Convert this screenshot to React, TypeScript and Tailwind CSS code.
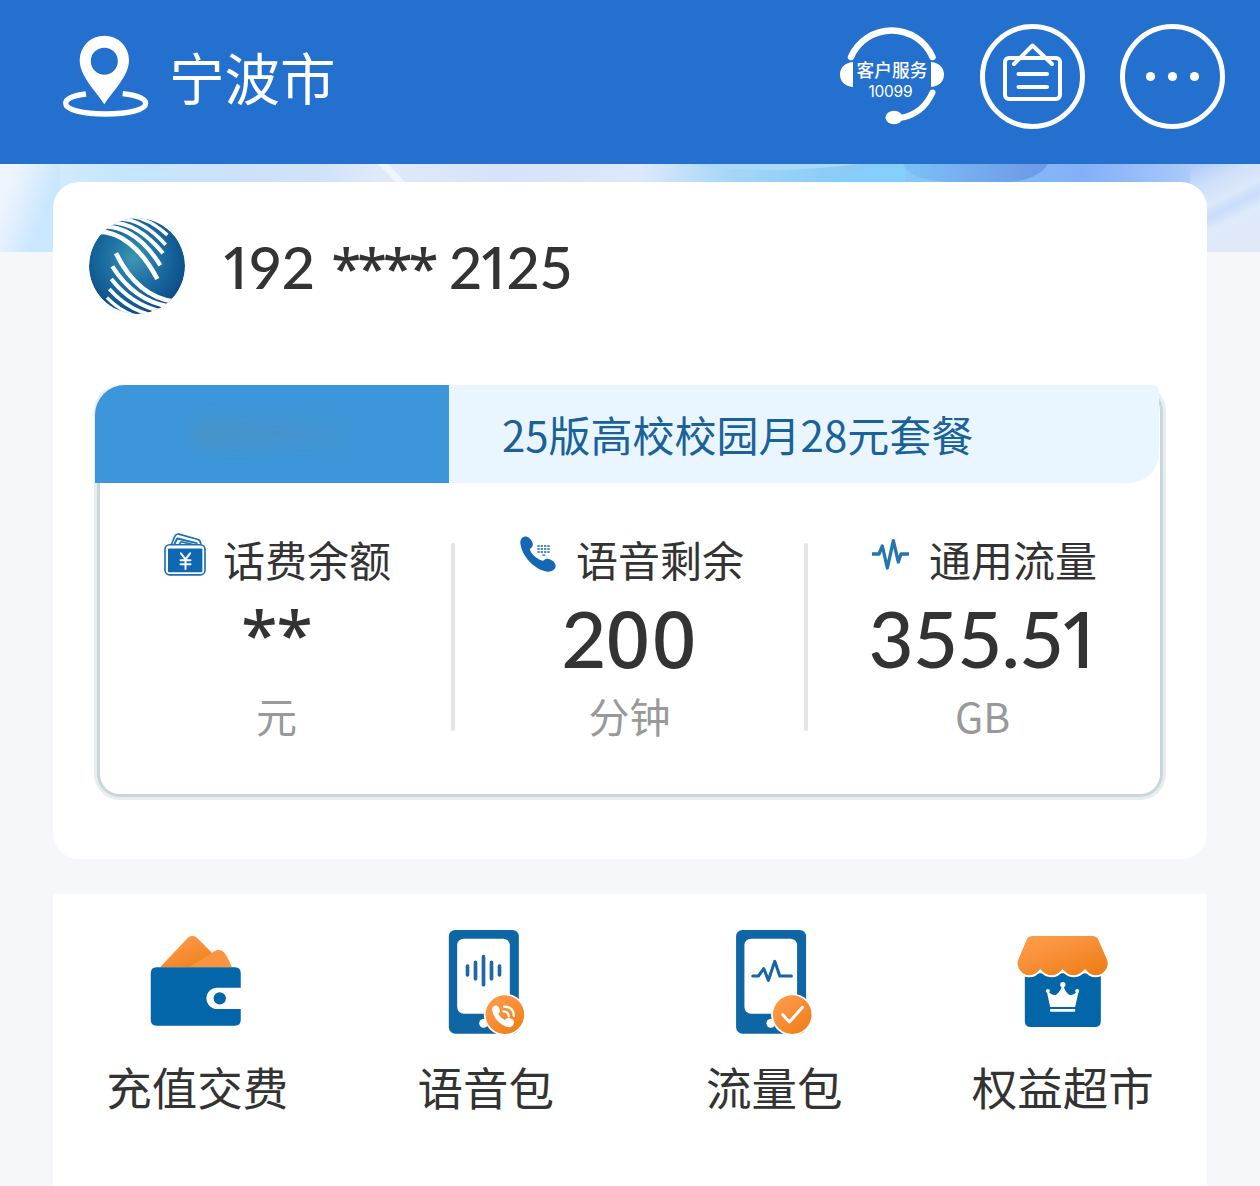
import React from 'react';

function Banner() {
  return (
    <svg className="absolute left-0 top-0 h-[88px] w-full" viewBox="0 164 1260 88" preserveAspectRatio="none">
      <defs>
        <linearGradient id="sky" x1="0" x2="1">
          <stop offset="0" stopColor="#eef5fe" />
          <stop offset="0.03" stopColor="#d6ebfd" />
          <stop offset="0.1" stopColor="#c4e6fd" />
          <stop offset="0.18" stopColor="#cce2fa" />
          <stop offset="0.25" stopColor="#cfe2f8" />
          <stop offset="0.3" stopColor="#dfeafa" />
          <stop offset="0.4" stopColor="#d6e3f8" />
          <stop offset="0.51" stopColor="#dce8fb" />
          <stop offset="0.58" stopColor="#a5d6f8" />
          <stop offset="0.65" stopColor="#8fcdf8" />
          <stop offset="0.76" stopColor="#80c4fa" />
          <stop offset="0.86" stopColor="#83b0f8" />
          <stop offset="0.93" stopColor="#a3c5fa" />
          <stop offset="1" stopColor="#d3e2fb" />
        </linearGradient>
        <linearGradient id="petal" x1="0" x2="1">
          <stop offset="0" stopColor="#7cc0f7" />
          <stop offset="1" stopColor="#6d98e6" />
        </linearGradient>
        <linearGradient id="leftGlow" gradientUnits="userSpaceOnUse" x1="0" y1="200" x2="44" y2="216">
          <stop offset="0" stopColor="#eff5fe" />
          <stop offset="0.3" stopColor="#e6f1fe" />
          <stop offset="1" stopColor="#c9e7fd" />
        </linearGradient>
        <linearGradient id="rightGlow" x1="0" y1="0" x2="0.4" y2="1">
          <stop offset="0" stopColor="#a9c9fb" />
          <stop offset="0.3" stopColor="#d2e1fa" />
          <stop offset="0.5" stopColor="#dbe7fa" />
          <stop offset="0.62" stopColor="#c9dcfa" />
          <stop offset="0.75" stopColor="#dfeafb" />
          <stop offset="1" stopColor="#dfe9f8" />
        </linearGradient>
      </defs>
      <rect x="0" y="164" width="1260" height="88" fill="url(#sky)" />
      <rect x="0" y="164" width="60" height="88" fill="url(#leftGlow)" />
      <rect x="1190" y="164" width="70" height="88" fill="url(#rightGlow)" />
      <path d="M690 164 Q760 176 860 164" fill="#a9dafa" />
      <path d="M800 182 Q850 180 873 164 H905 V182Z" fill="#84cffb" />
      <path d="M903 164 C910 178 930 181 950 182 H1012 Q1040 178 1048 164Z" fill="url(#petal)" />
      <path d="M378 164 L396 182 H405 L388 164Z" fill="#f2f8ff" opacity="0.8" />
    </svg>
  );
}

function PinIcon() {
  return (
    <svg className="h-[82px] w-[86px]" viewBox="69 45 258 246" fill="none">
      <path d="M138 222 C100 227 77 236 77 250 C77 270 130 282 197 282 C264 282 317 270 317 250 C317 236 292 226 248 221" stroke="#fff" strokeWidth="16" />
      <path fillRule="evenodd" fill="#fff" d="M193 253 C170 215 119 170 119 120 A74 73 0 0 1 267 120 C267 170 216 215 193 253Z M193 83 A40.500 40.500 0 1 0 193 164 A40.500 40.500 0 1 0 193 83Z" />
    </svg>
  );
}

function ServiceIcon() {
  return (
    <svg className="h-[106px] w-[106px]" viewBox="839 23 106 106">
      <g fill="none" stroke="#fff" strokeLinecap="round">
        <path d="M851 57 A44.500 44.500 0 0 1 932.500 57" strokeWidth="6.500" />
        <path d="M932.500 92.500 C926 107 916 115.500 900 118" strokeWidth="6" />
      </g>
      <path d="M853 62 V87 C844 86 840 81 840 74.500 C840 68 844 63 853 62Z M931 62 V87 C940 86 944 81 944 74.500 C944 68 940 63 931 62Z" fill="#fff" />
      <ellipse cx="894" cy="117.500" rx="8.500" ry="6.800" fill="#fff" />
      <text x="856.500" y="77.300" textLength="71" fontSize="17.700" fontWeight="500" fontFamily="Noto Sans CJK SC, sans-serif" fill="#fff">客户服务</text>
      <text x="868.500" y="97" textLength="44" fontSize="15.500" fontFamily="Inter, sans-serif" fill="#fff">10099</text>
    </svg>
  );
}

function BoardIcon() {
  return (
    <svg className="h-[106px] w-[106px]" viewBox="979 23 106 106" fill="none" stroke="#fff" strokeWidth="4" strokeLinecap="round" strokeLinejoin="round">
      <circle cx="1032.500" cy="76.500" r="50" strokeWidth="5" />
      <rect x="1005" y="58" width="55" height="41" rx="4" />
      <path d="M1014 64 L1032.500 45.500 L1052 64 M1018.500 74 H1047 M1018.500 87 H1047" />
    </svg>
  );
}

function MoreIcon() {
  return (
    <svg className="h-[106px] w-[106px]" viewBox="1119 23 106 106">
      <circle cx="1172.500" cy="76.500" r="50" fill="none" stroke="#fff" strokeWidth="5" />
      <g fill="#fff">
        <circle cx="1150.500" cy="76.500" r="4.600" />
        <circle cx="1172.500" cy="76.500" r="4.600" />
        <circle cx="1194.500" cy="76.500" r="4.600" />
      </g>
    </svg>
  );
}

function Logo() {
  return (
    <svg className="size-24" viewBox="57 53 288 288">
      <defs>
        <radialGradient id="globe" cx="0.46" cy="0.42" r="0.62">
          <stop offset="0" stopColor="#3f96b3" />
          <stop offset="0.4" stopColor="#1f74a4" />
          <stop offset="0.8" stopColor="#105792" />
          <stop offset="1" stopColor="#0e4681" />
        </radialGradient>
        <clipPath id="disc"><circle cx="201" cy="197" r="144" /></clipPath>
      </defs>
      <g clipPath="url(#disc)">
        <circle cx="201" cy="197" r="144" fill="url(#globe)" />
        <g fill="none" stroke="#fff">
          <path d="M86 94 C150 94 212 142 262 236" strokeWidth="14" />
          <path d="M100 78 C165 78 222 116 271 195" strokeWidth="13" />
          <path d="M120 66 C180 66 232 102 279 159" strokeWidth="12" />
          <path d="M148 56 C198 56 245 87 287 133" strokeWidth="11" />
          <path d="M180 48 C220 52 260 74 292 104" strokeWidth="10" />
          <path d="M138 159 C172 228 225 292 312 304" strokeWidth="14" />
          <path d="M127 198 C165 258 222 306 296 318" strokeWidth="13" />
          <path d="M124 236 C160 282 212 320 275 333" strokeWidth="12" />
          <path d="M118 266 C150 302 192 332 245 344" strokeWidth="11" />
          <path d="M111 292 C135 317 165 338 205 350" strokeWidth="10" />
        </g>
      </g>
    </svg>
  );
}

function BalanceIcon() {
  return (
    <svg className="h-[43px] w-[42px]" viewBox="75 66 127 129" fill="none" stroke="#1b6fb5" strokeWidth="5" strokeLinejoin="round" strokeLinecap="round">
      <path d="M97 101 L108 75 Q112 67 120 69 L178 85 Q187 89 186 101" />
      <path d="M106 100 L115 82 L174 96" strokeWidth="6" />
      <path d="M122 98 L127 92 L160 100" />
      <rect x="78" y="101" width="121" height="91" rx="14" fill="#fff" />
      <rect x="87" y="112" width="104" height="72" rx="3" fill="#0f68b4" stroke="none" />
      <path d="M126 127 L140 145 L154 127 M140 145 V174 M125 148 H155 M125 160 H155" stroke="#fff" strokeWidth="6" />
    </svg>
  );
}

function CallIcon() {
  return (
    <svg className="h-[36px] w-[36px]" viewBox="61 77 108 108">
      <path fill="#1468b3" d="M62 98 C61 84 72 76 82 79 C93 83 101 95 99 106 C98 113 89 113 91 119 C96 133 115 148 128 151 C134 151 135 145 142 145 C153 145 167 155 168 165 C169 177 156 185 144 184 C106 180 66 138 62 98Z" />
      <g fill="#4a8cc5">
        {[107, 116, 125].map((y) => [113, 123, 133, 143].map((x) => <rect key={`${x}-${y}`} x={x} y={y - 3} width="7" height="6" />))}
        <rect x="128" y="132" width="9" height="5" />
      </g>
    </svg>
  );
}

function PulseIcon() {
  return (
    <svg className="h-[32px] w-[37px]" viewBox="66 507 111 96" fill="none" stroke="#2676ad" strokeWidth="10" strokeLinejoin="round">
      <path d="M66 555 H87 L97 531 L112 597 L130 515 L145 579 L153 555 H177" />
    </svg>
  );
}

function OrangeGradient({ id }: { id: string }) {
  return (
    <linearGradient id={id} x1="0" y1="0" x2="0.8" y2="1">
      <stop offset="0" stopColor="#ff9c48" />
      <stop offset="0.35" stopColor="#fb9440" />
      <stop offset="1" stopColor="#ee7f16" />
    </linearGradient>
  );
}

function WalletIcon() {
  return (
    <svg className="h-[104px] w-[120px]" viewBox="141.750 60 360 312">
      <defs><OrangeGradient id="note" /></defs>
      <path d="M211 172 L296 82 Q308 72 320 82 L367 129 L390 172Z" fill="url(#note)" />
      <path d="M298 172 L374 124 Q389 115 402 126 Q412 138 427 172Z" fill="#fb943f" />
      <path d="M200 172 H436 Q453 172 453 190 V233 H382 A31.500 31.500 0 0 0 382 297 H453 V330 Q453 347 436 347 H200 Q183 347 183 330 V190 Q183 172 200 172Z" fill="#0366a9" />
      <circle cx="390" cy="265" r="18.500" fill="#0366a9" />
    </svg>
  );
}

function Handset() {
  return (
    <>
      <rect x="1077" y="60" width="210" height="311" rx="19" fill="#0f66a5" />
      <rect x="1102" y="86" width="158" height="225" rx="20" fill="#fff" />
      <circle cx="1181" cy="340" r="13" fill="#fff" />
      <circle cx="1245" cy="314" r="63" fill="#fff" />
    </>
  );
}

function VoicePackIcon() {
  return (
    <svg className="h-[104px] w-[120px]" viewBox="1008.500 60 360 312">
      <defs><OrangeGradient id="voiceBadge" /></defs>
      <Handset />
      <path d="M1133 168 V195 M1157 157 V206 M1181 140 V224 M1205 157 V206 M1229 168 V195" stroke="#1d67a2" strokeWidth="11" strokeLinecap="round" />
      <circle cx="1245" cy="314" r="58" fill="url(#voiceBadge)" />
      <path fill="#fff" d="M1207 300 C1206 290 1214 286 1222 287 Q1228 289 1230 300 Q1231 307 1226 312 Q1232 324 1245 330 Q1250 323 1257 324 Q1270 327 1272 334 Q1273 348 1260 352 C1235 350 1210 325 1207 300Z" />
      <path d="M1241 304 Q1255 304 1257 319 M1243 290 Q1272 291 1272 318" fill="none" stroke="#fff" strokeWidth="7" strokeLinecap="round" />
    </svg>
  );
}

function DataPackIcon() {
  return (
    <svg className="h-[104px] w-[120px]" viewBox="1010.750 60 360 312">
      <defs><OrangeGradient id="dataBadge" /></defs>
      <Handset />
      <path d="M1127 198 H1144 L1160 176 L1174 211 L1193 154 L1208 198 H1243" fill="none" stroke="#1565a3" strokeWidth="9" strokeLinecap="round" strokeLinejoin="round" />
      <circle cx="1245.500" cy="314" r="58" fill="url(#dataBadge)" />
      <path d="M1217 314 L1237 336 L1276 292" fill="none" stroke="#fff" strokeWidth="9" strokeLinecap="round" strokeLinejoin="round" />
    </svg>
  );
}

const AWNING =
  'M1029 78 H1207 Q1221 78 1226 90 L1252 150 Q1257 165 1247 180 Q1236 196 1218 196 Q1200 196 1186 177 Q1168 196 1151 196 Q1134 196 1118 177 Q1103 196 1085 196 Q1067 196 1051 177 Q1036 196 1018 196 Q1000 196 990 180 Q980 165 985 150 L1010 90 Q1015 78 1029 78Z';

function ShopIcon() {
  return (
    <svg className="h-[104px] w-[120px]" viewBox="939.500 60 360 312">
      <defs><OrangeGradient id="awning" /></defs>
      <path d="M1005 190 H1233 V333 Q1233 351 1215 351 H1023 Q1005 351 1005 333Z" fill="#0366a9" />
      <path d={AWNING} fill="none" stroke="#fff" strokeWidth="12" />
      <path d={AWNING} fill="url(#awning)" />
      <path d="M1070 241 Q1085 257 1098 255 Q1112 246 1119 222 Q1125 246 1139 255 Q1152 257 1167 241 L1156 291 H1081Z M1081 297 H1156 V305 H1081Z" fill="#fff" />
      <g fill="#fff">
        <circle cx="1119" cy="224" r="8" />
        <circle cx="1074" cy="243" r="6" />
        <circle cx="1162" cy="243" r="6" />
      </g>
    </svg>
  );
}

type StatProps = { icon: React.ReactNode; label: string; unit: string; children: React.ReactNode };

function Stat({ icon, label, unit, children }: StatProps) {
  return (
    <div className="flex w-[353px] flex-col items-center">
      <div className="flex h-[60px] items-center gap-[17px] pl-[2px]">
        <div className="flex w-[42px] justify-center pb-[12px]">{icon}</div>
        <span className="-translate-y-[1.5px] text-[42px] leading-[60px]">{label}</span>
      </div>
      <div className="flex h-[96px] items-center whitespace-nowrap text-[78px] font-medium leading-[78px]">{children}</div>
      <span className="mt-[-1px] text-[41px] leading-[60px] text-[#999]">{unit}</span>
    </div>
  );
}

function Divider() {
  return <div className="-mx-0.5 mt-[13px] h-[188px] w-1 shrink-0 rounded-full bg-[#e4e4e4]" />;
}

/* Round Lato figures, with the narrow "0" and footless "1" of Noto Sans. */
function Figures({ value }: { value: string }) {
  return (
    <>
      {value.split('').map((c, i) => {
        const nearOne = c === '1' || value[i + 1] === '1';
        return (
          <span
            key={i}
            className={
              c === '1'
                ? 'tracking-[-0.08em] font-["Noto_Sans",sans-serif]'
                : c === '0'
                  ? 'tracking-[0.02em] font-["Noto_Sans",sans-serif]'
                  : nearOne
                    ? 'tracking-[-0.08em] font-["Lato",sans-serif]'
                    : 'tracking-[-0.012em] font-["Lato",sans-serif]'
            }
          >
            {c}
          </span>
        );
      })}
    </>
  );
}

const services = [
  { label: '充值交费', icon: <WalletIcon /> },
  { label: '语音包', icon: <VoicePackIcon /> },
  { label: '流量包', icon: <DataPackIcon /> },
  { label: '权益超市', icon: <ShopIcon /> },
];

export default function App() {
  return (
    <div className='h-[1186px] w-[1260px] overflow-hidden bg-[#f6f7fb] font-["Noto_Sans_CJK_SC",sans-serif] text-[#333]'>
      <header className="flex h-[164px] justify-between bg-[#2470cf] pl-[63px] pr-[35px] text-white">
        <div className="flex items-start">
          <div className="pt-[35px]"><PinIcon /></div>
          <span className="ml-[20px] mt-[36px] text-[55.5px] leading-[80px]">宁波市</span>
        </div>
        <div className="flex gap-[34px] pt-[23px]">
          <ServiceIcon />
          <BoardIcon />
          <MoreIcon />
        </div>
      </header>

      <main className="relative px-[53px] pt-[18px]">
        <Banner />
        <section className="relative h-[677px] rounded-[26px] bg-white px-[36px] pt-[36px]">
          <div className="flex h-24 items-center">
            <Logo />
            <div className="ml-[35px] flex whitespace-pre pt-[2px] text-[58px] font-medium leading-[80px]">
              <span className="flex"><Figures value="192" /></span>
              <span className='ml-[17px] font-["Noto_Sans",sans-serif] text-[54px] tracking-[-3.8px]'>****</span>
              <span className="ml-[14px] flex"><Figures value="2125" /></span>
            </div>
          </div>

          <div className="ml-[11px] mt-[77px] h-[403px] w-[1060px] rounded-[20px] bg-white shadow-[0_0_0_3px_#cbd6db,0_0_0_6px_#e6eef2]">
            <div className="-ml-[5px] flex h-[98px] w-[1064px] -translate-y-[6px]">
              <div className="flex w-[354px] items-center justify-center rounded-tl-[30px] bg-[#3c96d9]">
                <div className="h-7 w-[160px] rounded-full bg-gradient-to-r from-[#5490b4] to-[#4494d0] opacity-50 blur-[8px]" />
              </div>
              <div className="flex w-[710px] items-center rounded-br-[30px] rounded-tr-[6px] bg-[#eaf6ff] pl-[53px] text-[42px] leading-[60px] text-[#1a6299]">
                25版高校校园月28元套餐
              </div>
            </div>
            <div className="flex pt-[41px]">
              <Stat icon={<BalanceIcon />} label="话费余额" unit="元">
                <span className='pb-[10px] font-["Noto_Sans",sans-serif] text-[66px] tracking-[-1px]'>**</span>
              </Stat>
              <Divider />
              <Stat icon={<CallIcon />} label="语音剩余" unit="分钟"><Figures value="200" /></Stat>
              <Divider />
              <Stat icon={<PulseIcon />} label="通用流量" unit="GB"><Figures value="355.51" /></Stat>
            </div>
          </div>
        </section>

        <section className="mt-[35px] grid h-[292px] grid-cols-4 bg-white pt-[36px]">
          {services.map((s) => (
            <div key={s.label} className="flex flex-col items-center">
              {s.icon}
              <span className="mt-[22px] text-[45.5px] leading-[60px]">{s.label}</span>
            </div>
          ))}
        </section>
      </main>
    </div>
  );
}
